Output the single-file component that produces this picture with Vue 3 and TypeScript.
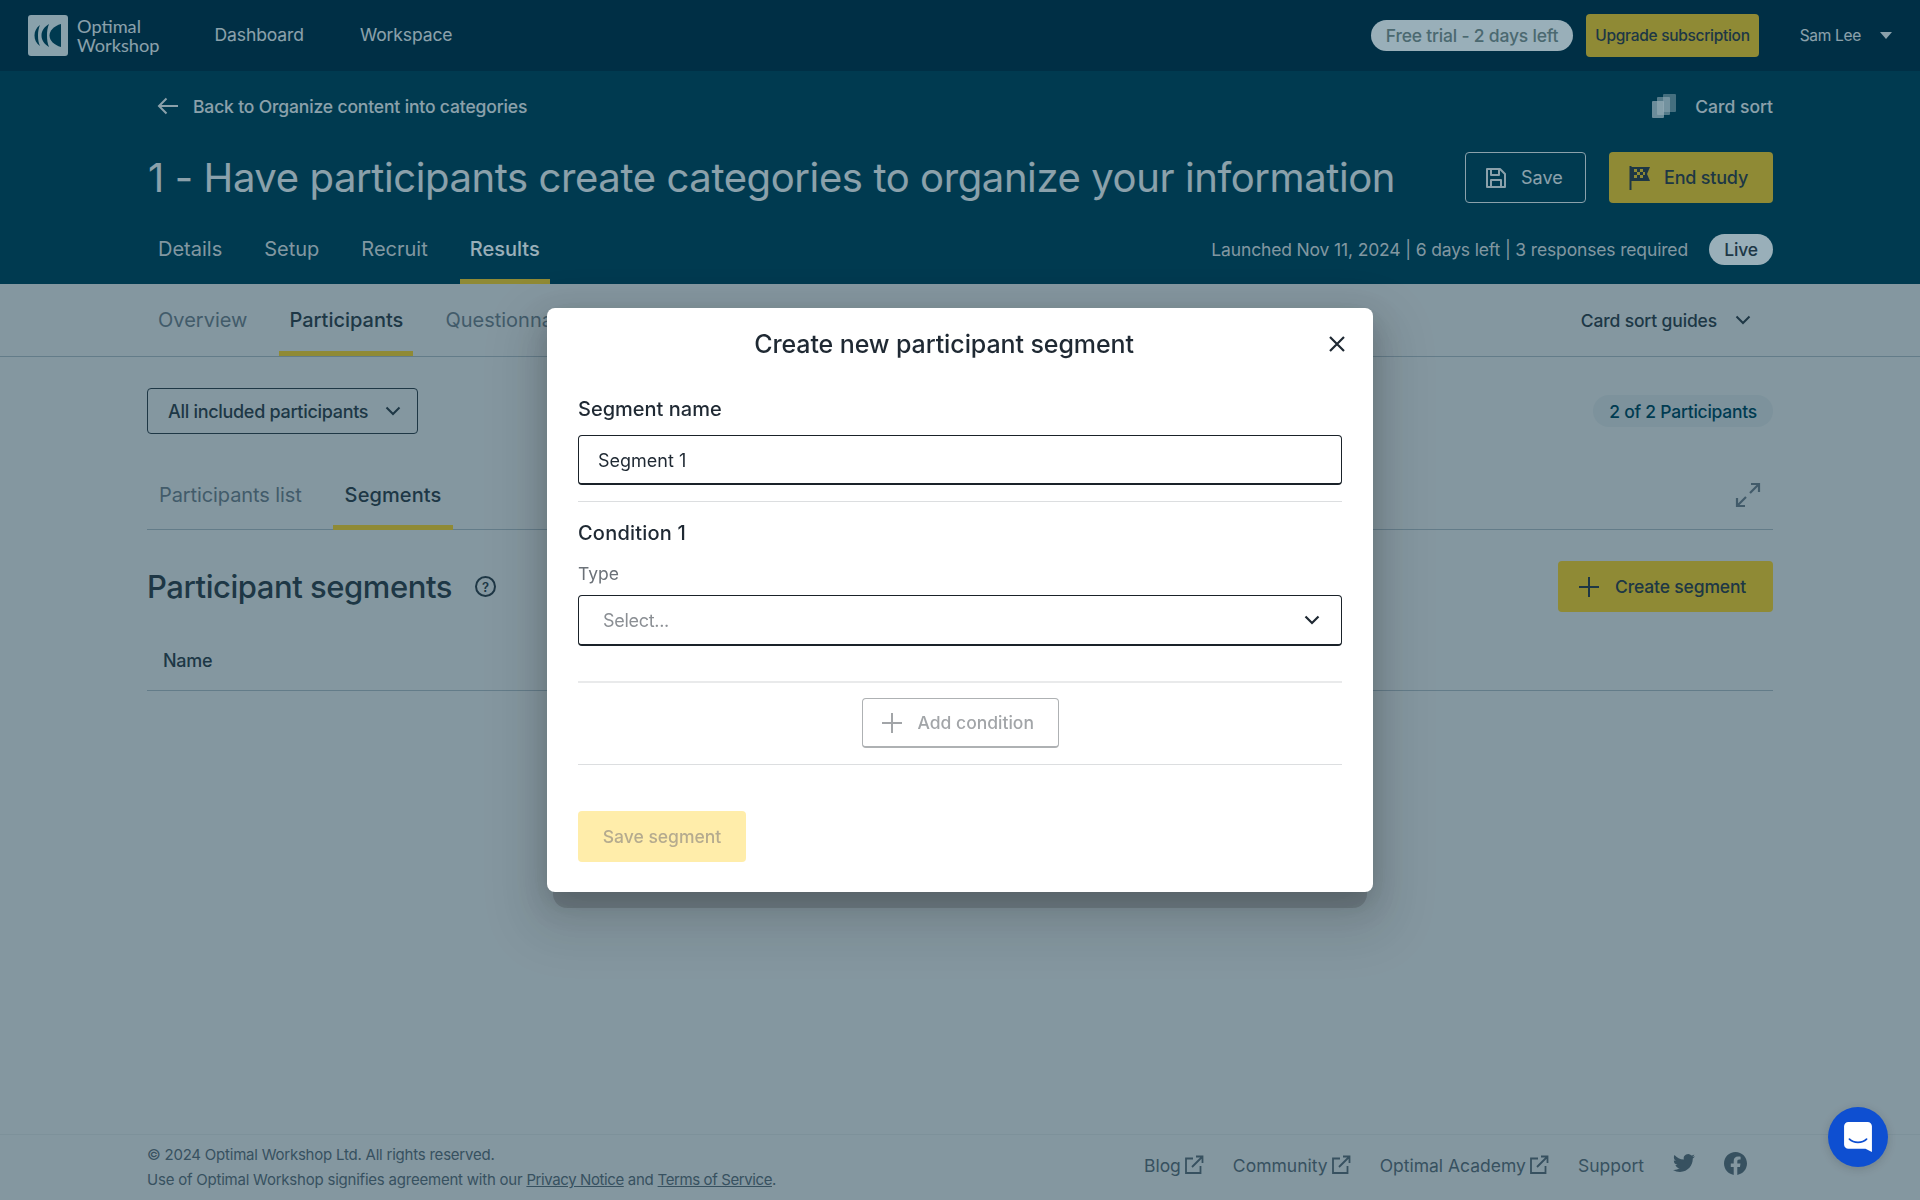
<template>
  <div class="page">
    <header class="topbar">
      <div class="brand">
        <svg class="logo" width="40" height="41" viewBox="0 0 40 41">
          <rect width="40" height="41" rx="3" fill="#e4e8e8" />
          <path d="M12 10c-4 3-5.500 6.500-5.500 10.500S8 28 12 31c-1.400-3-2-6.500-2-10.500s.6-7.500 2-10.500z" fill="#003c50" />
          <path d="M21 9c-5 3-7.500 7-7.500 11.500S16 29 21 32c-1.500-3.500-2-7.500-2-11.500s.5-8 2-11.500z" fill="#003c50" />
          <path d="M33 9c-7 2-11.500 6.500-11.500 11.500S26 30 33 32z" fill="#003c50" />
        </svg>
        <span class="brand-name">Optimal<br />Workshop</span>
      </div>
      <nav class="topnav">
        <a>Dashboard</a>
        <a>Workspace</a>
      </nav>
      <div class="top-right">
        <span class="trial">Free trial - 2 days left</span>
        <button class="upgrade">Upgrade subscription</button>
        <span class="user">Sam Lee</span>
        <span class="caret"></span>
      </div>
    </header>

    <section class="study">
      <div class="back-row">
        <a class="back">
          <svg width="22" height="18" viewBox="0 0 22 18" fill="none" stroke="currentColor" stroke-width="2">
            <path d="M21 9H2M9.500 1.500 2 9l7.500 7.500" />
          </svg>
          Back to Organize content into categories
        </a>
        <span class="kind">
          <svg width="26" height="26" viewBox="0 0 26 26">
            <rect x="12" y="1" width="13" height="18" rx="1" fill="#ffffff" opacity=".45" />
            <rect x="6" y="4" width="13" height="18" rx="1" fill="#ffffff" opacity=".55" />
            <rect x="1" y="8" width="12" height="17" rx="1" fill="#ffffff" opacity=".7" />
          </svg>
          Card sort
        </span>
      </div>
      <div class="title-row">
        <h1>1 - Have participants create categories to organize your information</h1>
        <button class="btn-outline">
          <svg width="22" height="22" viewBox="0 0 22 22" fill="none" stroke="currentColor" stroke-width="2" stroke-linejoin="round">
            <path d="M2 2h13l5 5v13H2z" />
            <path d="M6 2v6h8V2M6 20v-7h10v7" />
          </svg>
          Save
        </button>
        <button class="btn-yellow end">
          <svg width="22" height="26" viewBox="0 0 22 26">
            <path d="M1.500 1v24" stroke="#32373f" stroke-width="2" />
            <path d="M2 2h19l-3 7 3 7H2z" fill="#32373f" />
            <path d="M5 4h3v3H5zm6 0h3v3h-3zM8 7h3v3H8zm6 0h2v3h-2zM5 10h3v3H5zm6 0h3v3h-3z" fill="#eec123" />
          </svg>
          End study
        </button>
      </div>
      <div class="tab-row">
        <nav class="tabs dark">
          <a v-for="t in studyTabs" :key="t" :class="{ active: t === 'Results' }">{{ t }}</a>
        </nav>
        <div class="status">
          <span>Launched Nov 11, 2024 | 6 days left | 3 responses required</span>
          <span class="live">Live</span>
        </div>
      </div>
    </section>

    <div class="subnav">
      <nav class="tabs">
        <a v-for="t in resultTabs" :key="t" :class="{ active: t === 'Participants' }">{{ t }}</a>
      </nav>
      <span class="guides">
        Card sort guides
        <svg width="16" height="10" viewBox="0 0 16 10" fill="none" stroke="currentColor" stroke-width="2"><path d="m1.500 1.500 6.500 6.500 6.500-6.500" /></svg>
      </span>
    </div>

    <main class="content">
      <div class="filter-row">
        <button class="filter">
          All included participants
          <svg width="16" height="10" viewBox="0 0 16 10" fill="none" stroke="currentColor" stroke-width="2"><path d="m1.500 1.500 6.500 6.500 6.500-6.500" /></svg>
        </button>
        <span class="count">2 of 2 Participants</span>
      </div>

      <div class="inner-tabs">
        <nav class="tabs">
          <a>Participants list</a>
          <a class="active">Segments</a>
        </nav>
        <svg class="expand" width="26" height="26" viewBox="0 0 26 26" fill="none" stroke="currentColor" stroke-width="2.200">
          <path d="M15 11 24 2M16 2h8v8M11 15l-9 9M2 16v8h8" />
        </svg>
      </div>

      <div class="segments-head">
        <h2>Participant segments</h2>
        <span class="help">?</span>
        <button class="btn-yellow create">
          <svg width="22" height="22" viewBox="0 0 22 22" fill="none" stroke="currentColor" stroke-width="2"><path d="M11 1v20M1 11h20" /></svg>
          Create segment
        </button>
      </div>

      <div class="table-head">Name</div>
    </main>

    <footer class="footer">
      <div class="legal">
        <p>© 2024 Optimal Workshop Ltd. All rights reserved.</p>
        <p>Use of Optimal Workshop signifies agreement with our <u>Privacy Notice</u> and <u>Terms of Service</u>.</p>
      </div>
      <div class="links">
        <a v-for="l in externalLinks" :key="l">
          {{ l }}
          <svg width="20" height="20" viewBox="0 0 20 20" fill="none" stroke="currentColor" stroke-width="1.800">
            <path d="M9 3.500H2V18h14.500v-7M8 12 18 2M12 1.500h6.500V8" />
          </svg>
        </a>
        <a>Support</a>
        <svg class="social" width="22" height="22" viewBox="0 0 24 24" fill="currentColor">
          <path d="M23.953 4.570a10 10 0 01-2.825.775 4.958 4.958 0 002.163-2.723c-.951.555-2.005.959-3.127 1.184a4.920 4.920 0 00-8.384 4.482C7.690 8.095 4.067 6.130 1.640 3.162a4.822 4.822 0 00-.666 2.475c0 1.710.870 3.213 2.188 4.096a4.904 4.904 0 01-2.228-.616v.060a4.923 4.923 0 003.946 4.827 4.996 4.996 0 01-2.212.085 4.936 4.936 0 004.604 3.417 9.867 9.867 0 01-6.102 2.105c-.390 0-.779-.023-1.170-.067a13.995 13.995 0 007.557 2.209c9.053 0 13.998-7.496 13.998-13.985 0-.210 0-.420-.015-.630A9.935 9.935 0 0024 4.590z" />
        </svg>
        <svg class="social" width="23" height="23" viewBox="0 0 24 24" fill="currentColor">
          <path d="M24 12.073c0-6.627-5.373-12-12-12s-12 5.373-12 12c0 5.990 4.388 10.954 10.125 11.854v-8.385H7.078v-3.470h3.047V9.430c0-3.007 1.792-4.669 4.533-4.669 1.312 0 2.686.235 2.686.235v2.953H15.830c-1.491 0-1.956.925-1.956 1.874v2.250h3.328l-.532 3.470h-2.796v8.385C19.612 23.027 24 18.062 24 12.073z" />
        </svg>
      </div>
    </footer>

    <div class="overlay">
      <div class="modal">
        <div class="modal-head">
          <h3>Create new participant segment</h3>
          <button class="close">
            <svg width="16" height="16" viewBox="0 0 16 16" fill="none" stroke="currentColor" stroke-width="2.200"><path d="m1 1 14 14M15 1 1 15" /></svg>
          </button>
        </div>
        <div class="modal-body">
          <label class="field-label">Segment name</label>
          <div class="input">Segment 1</div>
          <hr class="first" />
          <h4>Condition 1</h4>
          <label class="type-label">Type</label>
          <div class="input select">
            <span>Select...</span>
            <svg width="16" height="10" viewBox="0 0 16 10" fill="none" stroke="#1f2933" stroke-width="2.200"><path d="m1.500 1.500 6.500 6.500 6.500-6.500" /></svg>
          </div>
          <hr class="second" />
          <button class="add">
            <svg width="20" height="20" viewBox="0 0 20 20" fill="none" stroke="currentColor" stroke-width="2"><path d="M10 0v20M0 10h20" /></svg>
            Add condition
          </button>
          <hr class="third" />
          <button class="save-segment">Save segment</button>
        </div>
      </div>
    </div>

    <button class="chat">
      <svg width="28" height="30" viewBox="0 0 26 28">
        <path d="M4 0h18a4 4 0 0 1 4 4v24l-6-3H4a4 4 0 0 1-4-4V4a4 4 0 0 1 4-4z" fill="#ffffff" />
        <path d="M5 16c2 2 5 3 8 3s6-1 8-3" fill="none" stroke="#0e4fd1" stroke-width="1.600" stroke-linecap="round" />
      </svg>
    </button>
  </div>
</template>

<script setup lang="ts">
const studyTabs: string[] = ['Details', 'Setup', 'Recruit', 'Results']
const resultTabs: string[] = ['Overview', 'Participants', 'Questionnaire', 'Analysis']
const externalLinks: string[] = ['Blog', 'Community', 'Optimal Academy']
</script>

<style>
html,
body {
  margin: 0;
  background: #dcd7d5;
}
</style>

<style scoped>
.page {
  display: flex;
  flex-direction: column;
  height: 1200px;
  overflow: hidden;
  font-family: Inter, "Noto Sans", sans-serif;
  font-size: 18px;
  color: #32373f;
}

button {
  font: inherit;
  letter-spacing: inherit;
  cursor: pointer;
}

h1, h2, h3, h4, p {
  margin: 0;
  font-weight: 400;
}

.topbar {
  display: flex;
  align-items: center;
  height: 71px;
  padding: 0 28px;
  background: #002b3f;
  color: #e8e8e8;
  box-sizing: border-box;
}

.brand {
  display: flex;
  align-items: center;
  gap: 9px;
}

.brand-name {
  font-size: 18.200px;
  line-height: 19px;
  font-family: Lato, Inter, sans-serif;
}

.topnav {
  display: flex;
  gap: 56px;
  margin-left: 55px;
  margin-bottom: 2px;
  font-size: 17.500px;
  letter-spacing: -0.1px;
}

.top-right {
  display: flex;
  align-items: center;
  margin-left: auto;
}

.trial {
  display: flex;
  align-items: center;
  height: 31px;
  padding: 0 15px;
  border-radius: 16px;
  background: #ffffff;
  color: #7d8a86;
  font-size: 17.500px;
  font-weight: 500;
  letter-spacing: -0.2px;
}

.upgrade {
  height: 43px;
  margin-left: 13px;
  padding: 0 9px;
  border: 0;
  border-radius: 4px;
  background: #eec123;
  color: #32373f;
  font-size: 15.500px;
  font-weight: 500;
  letter-spacing: -0.3px;
}

.user {
  margin-left: 41px;
  font-size: 15.500px;
  letter-spacing: -0.3px;
}

.caret {
  width: 0;
  height: 0;
  margin: 0 0 0 19px;
  border-style: solid;
  border-width: 7px 6px 0;
  border-color: #e8e8e8 transparent transparent;
}

.study {
  height: 213px;
  padding: 0 147px;
  background: #003c50;
  color: #e8e8e8;
  box-sizing: border-box;
}

.back-row {
  display: flex;
  align-items: center;
  justify-content: space-between;
  height: 70px;
}

.back {
  display: flex;
  align-items: center;
  gap: 14px;
  padding-left: 10px;
  font-size: 17.500px;
  font-weight: 500;
  letter-spacing: -0.15px;
}

.kind {
  display: flex;
  align-items: center;
  gap: 18px;
  font-size: 17.500px;
  font-weight: 500;
}

.title-row {
  display: flex;
  align-items: center;
  height: 51px;
  margin-top: 11px;
}

h1 {
  flex: 1;
  padding-left: 1px;
  font-size: 40px;
  white-space: nowrap;
  letter-spacing: -0.4px;
}

.btn-outline {
  display: flex;
  align-items: center;
  gap: 14px;
  width: 121px;
  height: 51px;
  padding: 0 19px;
  border: 1.500px solid #e8e8e8;
  border-radius: 4px;
  background: none;
  color: #e8e8e8;
  box-sizing: border-box;
}

.btn-yellow {
  display: flex;
  align-items: center;
  height: 51px;
  border: 0;
  border-radius: 4px;
  background: #eec123;
  color: #32373f;
  font-weight: 500;
  box-sizing: border-box;
}

.end {
  gap: 13px;
  width: 164px;
  margin-left: 23px;
  padding: 0 20px;
  letter-spacing: -0.2px;
}

.tab-row {
  display: flex;
  align-items: flex-end;
  justify-content: space-between;
  height: 81px;
}

.tabs {
  display: flex;
  align-items: stretch;
  padding-left: 1px;
}

.tabs a {
  display: flex;
  align-items: center;
  padding: 5px 10px 0;
  margin-right: 22px;
  border-bottom: 5px solid transparent;
  font-size: 20px;
  color: #6e747c;
}

.tabs a.active {
  border-bottom-color: #eec123;
  color: #32373f;
  font-weight: 500;
}

.tabs.dark {
  height: 65px;
}

.tabs.dark a {
  padding-top: 0;
  color: #d8d8d8;
}

.tabs.dark a.active {
  color: #ffffff;
}

.status {
  display: flex;
  align-items: center;
  gap: 21px;
  height: 31px;
  margin-bottom: 19px;
  color: #d8d8d8;
  font-size: 17.500px;
  letter-spacing: -0.15px;
}

.live {
  display: flex;
  align-items: center;
  justify-content: center;
  width: 64px;
  height: 31px;
  border-radius: 16px;
  background: #ffffff;
  color: #32373f;
  font-weight: 500;
}

.subnav {
  display: flex;
  align-items: stretch;
  justify-content: space-between;
  height: 73px;
  padding: 0 147px;
  border-bottom: 1px solid #a6abb0;
  box-sizing: border-box;
}

.guides {
  display: flex;
  align-items: center;
  gap: 18px;
  padding-right: 22px;
  font-size: 17.500px;
  font-weight: 500;
  letter-spacing: -0.15px;
}

.content {
  flex: 1;
  padding: 0 147px;
}

.filter-row {
  display: flex;
  align-items: center;
  justify-content: space-between;
  height: 46px;
  margin-top: 31px;
}

.filter {
  display: flex;
  align-items: center;
  justify-content: space-between;
  width: 271px;
  height: 46px;
  padding: 0 16px 0 20px;
  border: 1.500px solid #32373f;
  border-radius: 4px;
  background: none;
  color: #32373f;
  font-size: 18px;
  font-weight: 500;
  letter-spacing: -0.3px;
  box-sizing: border-box;
  white-space: nowrap;
}

.count {
  display: flex;
  align-items: center;
  height: 32px;
  padding: 0 16px;
  border-radius: 16px;
  background: #d0cfcf;
  color: #003e53;
  font-size: 17.500px;
  font-weight: 500;
  letter-spacing: -0.25px;
}

.inner-tabs {
  display: flex;
  align-items: stretch;
  justify-content: space-between;
  height: 74px;
  margin-top: 22px;
  border-bottom: 1px solid #a6abb0;
  box-sizing: border-box;
}

.inner-tabs .tabs {
  padding-left: 0;
}

.inner-tabs .tabs a {
  padding: 9px 12px 0;
  margin-right: 19px;
  margin-bottom: -1px;
  letter-spacing: -0.1px;
}

.inner-tabs .tabs a.active {
  letter-spacing: 0.1px;
}

.expand {
  align-self: center;
  margin: 5px 12px 0 0;
  color: #6e747c;
}

.segments-head {
  display: flex;
  align-items: center;
  height: 51px;
  margin-top: 31px;
}

h2 {
  font-size: 31px;
  font-weight: 500;
  letter-spacing: -0.45px;
}

.help {
  display: flex;
  align-items: center;
  justify-content: center;
  width: 17px;
  height: 17px;
  margin-left: 23px;
  border: 2px solid #32373f;
  border-radius: 50%;
  font-size: 13px;
  font-weight: 600;
}

.create {
  gap: 15px;
  width: 215px;
  margin-left: auto;
  padding: 0 20px;
  font-size: 17.500px;
  letter-spacing: -0.15px;
}

.table-head {
  height: 79px;
  padding: 0 16px;
  line-height: 98px;
  border-bottom: 1px solid #a6abb0;
  font-weight: 500;
  letter-spacing: -0.3px;
  box-sizing: border-box;
}

.footer {
  display: flex;
  align-items: center;
  justify-content: space-between;
  height: 66px;
  padding: 0 147px;
  border-top: 1px solid #d0cdcc;
  font-size: 15px;
  box-sizing: border-box;
  color: #5c636b;
}

.legal {
  margin-bottom: 1px;
}

.legal p {
  line-height: 25px;
  letter-spacing: -0.22px;
}

.legal u {
  letter-spacing: -0.4px;
}

.links {
  display: flex;
  align-items: center;
  gap: 29px;
  margin-bottom: 5px;
  padding-right: 26px;
  font-size: 17.500px;
}

.links a {
  display: flex;
  align-items: center;
  gap: 3px;
}

.social {
  margin-top: -4px;
}

.overlay {
  position: fixed;
  inset: 0;
  display: flex;
  align-items: center;
  justify-content: center;
  background: rgba(0, 55, 80, 0.4);
}

.modal {
  position: relative;
  width: 826px;
  height: 584px;
  border-radius: 8px;
  background: #ffffff;
  color: #1f2933;
  box-shadow: 0 10px 30px rgba(0, 0, 0, 0.18), 0 24px 50px 20px rgba(0, 0, 0, 0.1);
}

.modal::after {
  content: "";
  position: absolute;
  z-index: -1;
  top: 30px;
  left: 6px;
  right: 6px;
  bottom: -16px;
  border-radius: 14px;
  background: rgba(0, 0, 0, 0.14);
}

.modal-head {
  display: flex;
  align-items: center;
  height: 71px;
  padding: 0 11px 0 29px;
}

h3 {
  flex: 1;
  font-size: 25px;
  font-weight: 500;
  letter-spacing: -0.1px;
  text-align: center;
}

.close {
  width: 50px;
  height: 36px;
  margin-top: 4px;
  border: 0;
  background: none;
  color: #1f2933;
}

.modal-body {
  display: flex;
  flex-direction: column;
  padding: 0 31px;
}

.field-label {
  margin-top: 16px;
  font-size: 20px;
  font-weight: 500;
  line-height: 28px;
}

.input {
  display: flex;
  align-items: center;
  height: 50px;
  margin-top: 12px;
  padding: 2px 19px 0;
  border: 1px solid #1a2229;
  border-bottom-width: 2px;
  border-radius: 4px;
  box-sizing: border-box;
}

hr {
  width: 100%;
  height: 1px;
  margin: 0;
  border: 0;
  background: #dcdee0;
}

hr.first {
  margin-top: 16px;
}

h4 {
  margin-top: 17px;
  font-size: 20px;
  font-weight: 500;
  letter-spacing: 0.2px;
  line-height: 28px;
}

.type-label {
  margin-top: 15px;
  color: #6b7178;
  font-size: 17.500px;
  line-height: 24px;
}

.select {
  justify-content: space-between;
  height: 51px;
  margin-top: 9px;
  padding: 0 21px 0 24px;
  color: #8b8f94;
  letter-spacing: -0.3px;
}

hr.second {
  height: 2px;
  margin-top: 35px;
  background: #e9eaeb;
}

.add {
  display: flex;
  align-items: center;
  align-self: center;
  gap: 16px;
  width: 197px;
  height: 50px;
  margin-top: 15px;
  padding: 0 19px;
  border: 1px solid #aeb1b3;
  border-bottom-width: 2px;
  border-radius: 4px;
  background: #ffffff;
  color: #a2a5a8;
  font-size: 17.500px;
  font-weight: 500;
  box-sizing: border-box;
  white-space: nowrap;
}

hr.third {
  margin-top: 16px;
}

.save-segment {
  width: 168px;
  height: 51px;
  margin-top: 46px;
  border: 0;
  border-radius: 4px;
  background: #ffedaa;
  color: #b5ab8f;
  font-size: 17.500px;
  font-weight: 500;
}

.chat {
  position: fixed;
  left: 1828px;
  top: 1107px;
  display: flex;
  align-items: center;
  justify-content: center;
  width: 60px;
  height: 60px;
  border: 0;
  border-radius: 50%;
  background: #0e4fd1;
  box-shadow: 0 2px 10px rgba(0, 0, 0, 0.15);
}
</style>
